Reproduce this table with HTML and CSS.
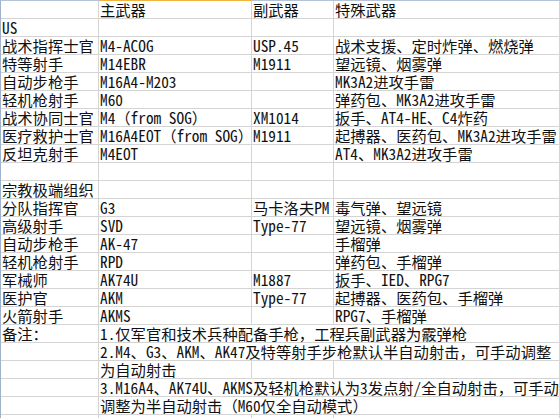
FILE: index.html
```html
<!DOCTYPE html>
<html lang="zh-CN">
<head>
<meta charset="utf-8">
<title>武器配置</title>
<link rel="stylesheet" href="styles.css">
</head>
<body>
<div class="sheet">
  <div class="c h a"></div><div class="c h sel">主武器</div><div class="c h">副武器</div><div class="c h">特殊武器</div>
  <div class="c a">US</div><div class="c"></div><div class="c"></div><div class="c"></div>
  <div class="c a">战术指挥士官</div><div class="c">M4-ACOG</div><div class="c">USP.45</div><div class="c">战术支援、定时炸弹、燃烧弹</div>
  <div class="c a">特等射手</div><div class="c">M14EBR</div><div class="c">M1911</div><div class="c">望远镜、烟雾弹</div>
  <div class="c a">自动步枪手</div><div class="c">M16A4-M203</div><div class="c"></div><div class="c">MK3A2进攻手雷</div>
  <div class="c a">轻机枪射手</div><div class="c">M60</div><div class="c"></div><div class="c">弹药包、MK3A2进攻手雷</div>
  <div class="c a">战术协同士官</div><div class="c">M4（from SOG）</div><div class="c">XM1014</div><div class="c">扳手、AT4-HE、C4炸药</div>
  <div class="c a">医疗救护士官</div><div class="c">M16A4EOT（from SOG）</div><div class="c">M1911</div><div class="c">起搏器、医药包、MK3A2进攻手雷</div>
  <div class="c a">反坦克射手</div><div class="c">M4EOT</div><div class="c"></div><div class="c">AT4、MK3A2进攻手雷</div>
  <div class="c a"></div><div class="c"></div><div class="c"></div><div class="c"></div>
  <div class="c a">宗教极端组织</div><div class="c"></div><div class="c"></div><div class="c"></div>
  <div class="c a">分队指挥官</div><div class="c">G3</div><div class="c">马卡洛夫PM</div><div class="c">毒气弹、望远镜</div>
  <div class="c a">高级射手</div><div class="c">SVD</div><div class="c">Type-77</div><div class="c">望远镜、烟雾弹</div>
  <div class="c a">自动步枪手</div><div class="c">AK-47</div><div class="c"></div><div class="c">手榴弹</div>
  <div class="c a">轻机枪射手</div><div class="c">RPD</div><div class="c"></div><div class="c">弹药包、手榴弹</div>
  <div class="c a">军械师</div><div class="c">AK74U</div><div class="c">M1887</div><div class="c">扳手、IED、RPG7</div>
  <div class="c a">医护官</div><div class="c">AKM</div><div class="c">Type-77</div><div class="c">起搏器、医药包、手榴弹</div>
  <div class="c a">火箭射手</div><div class="c">AKMS</div><div class="c"></div><div class="c">RPG7、手榴弹</div>
  <div class="c a">备注：</div><div class="c span">1.仅军官和技术兵种配备手枪，工程兵副武器为霰弹枪</div>
  <div class="c a"></div><div class="c span">2.M4、G3、AKM、AK47及特等射手步枪默认半自动射击，可手动调整</div>
  <div class="c a"></div><div class="c">为自动射击</div><div class="c"></div><div class="c"></div>
  <div class="c a"></div><div class="c span">3.M16A4、AK74U、AKMS及轻机枪默认为3发点射/全自动射击，可手动</div>
  <div class="c a"></div><div class="c span">调整为半自动射击（M60仅全自动模式）</div>
  <div class="c a"></div><div class="c"></div><div class="c"></div><div class="c"></div>
</div>
</body>
</html>
```

FILE: styles.css
```css
html, body {
  margin: 0;
  padding: 0;
  background: #ffffff;
  overflow: hidden;
}

.sheet {
  display: grid;
  grid-template-columns: 98px 153px 82px 1fr;
  grid-auto-rows: 18px;
  border-left: 1px solid #9fb3cc;
  border-top: 1px solid #b5c3d6;
  width: 559px;
  font-family: "Noto Sans Mono CJK SC", "Noto Sans CJK SC", monospace;
  font-size: 15.3px;
  color: #111111;
}

.c {
  box-sizing: border-box;
  border-right: 1px solid #d4d4d4;
  border-bottom: 1px solid #d4d4d4;
  padding-left: 1px;
  white-space: nowrap;
  overflow: visible;
  line-height: 17px;
}

.c.a {
  padding-left: 1px;
}

.c.h {
  height: 18px;
}

.c.sel {
  box-shadow: 0 -1px 0 #f0b43c;
}

.c.span {
  grid-column: 2 / 5;
}
```
